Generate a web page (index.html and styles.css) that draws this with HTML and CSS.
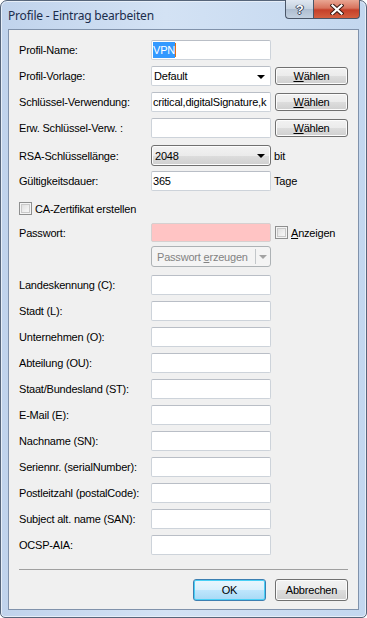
FILE: index.html
```html
<!DOCTYPE html>
<html lang="de">
<head>
  <meta charset="UTF-8">
  <title>Profile - Eintrag bearbeiten</title>
  <link rel="stylesheet" href="styles.css">
</head>
<body>
  <div class="window">
    <div class="titlebar">
      <span class="title">Profile - Eintrag bearbeiten</span>
      <div class="caption-buttons">
        <div class="cap-btn help">?</div>
        <div class="cap-btn close">
          <svg width="14" height="11" viewBox="0 0 14 11">
            <path d="M2.5 1.5 L11.5 9.5 M11.5 1.5 L2.5 9.5" stroke="#3b1a14" stroke-width="4.2" stroke-linecap="square" />
            <path d="M2.5 1.5 L11.5 9.5 M11.5 1.5 L2.5 9.5" stroke="#fff" stroke-width="2.2" stroke-linecap="square" />
          </svg>
        </div>
      </div>
    </div>

    <div class="client">
      <div class="form">
        <div class="row">
          <label class="lbl">Profil-Name:</label>
          <div class="edit"><span class="selected">VPN</span><span class="caret"></span></div>
        </div>
        <div class="row">
          <label class="lbl">Profil-Vorlage:</label>
          <div class="edit combo">Default<span class="arrow"></span></div>
          <button class="btn pick"><u>W</u>ählen</button>
        </div>
        <div class="row">
          <label class="lbl">Schlüssel-Verwendung:</label>
          <div class="edit">critical,digitalSignature,k</div>
          <button class="btn pick"><u>W</u>ählen</button>
        </div>
        <div class="row">
          <label class="lbl">Erw. Schlüssel-Verw. :</label>
          <div class="edit"></div>
          <button class="btn pick"><u>W</u>ählen</button>
        </div>
        <div class="row row-rsa">
          <label class="lbl">RSA-Schlüssellänge:</label>
          <div class="dropdown">2048<span class="arrow"></span></div>
          <span class="unit">bit</span>
        </div>
        <div class="row row-valid">
          <label class="lbl">Gültigkeitsdauer:</label>
          <div class="edit">365</div>
          <span class="unit">Tage</span>
        </div>
        <div class="row row-check">
          <span class="checkbox"></span>
          <span class="check-text">CA-Zertifikat erstellen</span>
        </div>
        <div class="row row-pass">
          <label class="lbl">Passwort:</label>
          <div class="edit required"></div>
          <span class="checkbox show"></span>
          <span class="check-text"><u>A</u>nzeigen</span>
        </div>
        <div class="row row-gen">
          <span class="lbl"></span>
          <div class="split disabled">
            <span class="split-text"><span>Passwort <u>e</u>rzeugen</span></span>
            <span class="split-arrow"><span class="arrow"></span></span>
          </div>
        </div>
        <div class="row row-first">
          <label class="lbl">Landeskennung (C):</label>
          <div class="edit"></div>
        </div>
        <div class="row">
          <label class="lbl">Stadt (L):</label>
          <div class="edit"></div>
        </div>
        <div class="row">
          <label class="lbl">Unternehmen (O):</label>
          <div class="edit"></div>
        </div>
        <div class="row">
          <label class="lbl">Abteilung (OU):</label>
          <div class="edit"></div>
        </div>
        <div class="row">
          <label class="lbl">Staat/Bundesland (ST):</label>
          <div class="edit"></div>
        </div>
        <div class="row">
          <label class="lbl">E-Mail (E):</label>
          <div class="edit"></div>
        </div>
        <div class="row">
          <label class="lbl">Nachname (SN):</label>
          <div class="edit"></div>
        </div>
        <div class="row">
          <label class="lbl">Seriennr. (serialNumber):</label>
          <div class="edit"></div>
        </div>
        <div class="row">
          <label class="lbl">Postleitzahl (postalCode):</label>
          <div class="edit"></div>
        </div>
        <div class="row">
          <label class="lbl">Subject alt. name (SAN):</label>
          <div class="edit"></div>
        </div>
        <div class="row">
          <label class="lbl">OCSP-AIA:</label>
          <div class="edit"></div>
        </div>
      </div>

      <div class="separator"></div>

      <div class="footer">
        <button class="btn dialog default">OK</button>
        <button class="btn dialog">Abbrechen</button>
      </div>
    </div>
  </div>
</body>
</html>
```

FILE: styles.css
```css
body {
  margin: 0;
  background: #fff;
  font-family: "Liberation Sans", Arial, sans-serif;
  font-size: 11px;
  letter-spacing: -0.2px;
  color: #000;
}

.window {
  width: 367px;
  height: 618px;
  box-sizing: border-box;
  padding: 0 7px 7px 7px;
  border: 1px solid #56657a;
  border-radius: 7px 7px 5px 5px;
  background: linear-gradient(90deg, #c0d3ec 0%, #d3e2f4 45%, #c3d7ef 100%);
  box-shadow: inset 0 0 0 1px #e6eef8;
  display: flex;
  flex-direction: column;
}

/* Titelleiste */
.titlebar {
  height: 28px;
  display: flex;
  align-items: flex-start;
  justify-content: space-between;
}

.title {
  font-family: "Noto Sans", "Liberation Sans", sans-serif;
  font-size: 12px;
  color: #1b2d4c;
  margin-top: 6px;
  letter-spacing: -0.2px;
}

.caption-buttons {
  display: flex;
  margin-top: -1px;
  margin-right: -1px;
}

.cap-btn {
  height: 19px;
  box-sizing: border-box;
  border: 1px solid #4a5668;
  border-top: none;
  display: flex;
  align-items: center;
  justify-content: center;
}

.cap-btn.help {
  width: 28px;
  border-right: none;
  border-radius: 0 0 0 4px;
  background: linear-gradient(#dfe7f1 0%, #c6d2e0 48%, #aebdd0 52%, #c2d0e0 100%);
  font-family: "Liberation Sans", sans-serif;
  font-weight: bold;
  font-size: 13px;
  color: #fff;
  text-shadow: 0 0 1px #28324a, 1px 0 0 #3a4660, -1px 0 0 #3a4660, 0 1px 0 #3a4660;
}

.cap-btn.close {
  width: 47px;
  border-radius: 0 0 4px 0;
  background: linear-gradient(#e9a693 0%, #d8735d 45%, #c5402a 55%, #d45f3f 100%);
}

/* Client-Bereich */
.client {
  flex: 1;
  border: 1px solid #8092ab;
  background: #f0f0f0;
  padding: 10px 10px 0 10px;
}

.row {
  display: flex;
  align-items: center;
  height: 20px;
  margin-top: 6px;
}

.row:first-child {
  margin-top: 0;
}

.row-rsa {
  height: 21px;
  margin-top: 7px;
}

.row-valid {
  margin-top: 5px;
}

.row-check {
  height: 19px;
  margin-top: 8px;
}

.row-pass {
  height: 19px;
  margin-top: 5px;
}

.row-gen {
  height: 21px;
  margin-top: 4px;
}

.row-first {
  margin-top: 8px;
}

.lbl {
  width: 132px;
  flex: none;
  white-space: nowrap;
}

.edit {
  width: 120px;
  height: 100%;
  box-sizing: border-box;
  flex: none;
  border: 1px solid #cdd3da;
  border-top-color: #b9bec6;
  border-radius: 2px;
  background: #fff;
  padding: 0 1px;
  display: flex;
  align-items: center;
  white-space: nowrap;
  overflow: hidden;
  position: relative;
}

.edit.required {
  background: #ffc4c4;
  border-color: #d6d0d0;
}

.selected {
  background: #3399ff;
  color: #fff;
  padding: 1px 0;
  line-height: 14px;
}

.caret {
  width: 1px;
  height: 14px;
  background: #e07010;
}

.edit.combo {
  padding-left: 2px;
}

.arrow {
  width: 0;
  height: 0;
  border-left: 4px solid transparent;
  border-right: 4px solid transparent;
  border-top: 4px solid #000;
}

.edit.combo .arrow,
.dropdown .arrow {
  position: absolute;
  right: 5px;
  top: 8px;
}

.dropdown {
  width: 120px;
  height: 100%;
  box-sizing: border-box;
  flex: none;
  position: relative;
  border: 1px solid #707070;
  border-radius: 3px;
  background: linear-gradient(#f2f2f2 0%, #ebebeb 50%, #dddddd 51%, #cfcfcf 100%);
  box-shadow: inset 0 0 0 1px #fcfcfc;
  padding-left: 3px;
  display: flex;
  align-items: center;
}

.unit {
  margin-left: 3px;
}

.btn {
  font-family: "Liberation Sans", Arial, sans-serif;
  font-size: 11px;
  letter-spacing: -0.2px;
  color: #000;
  margin: 0;
  padding: 0;
  border: 1px solid #707070;
  border-radius: 3px;
  background: linear-gradient(#f2f2f2 0%, #ebebeb 50%, #dddddd 51%, #cfcfcf 100%);
  box-shadow: inset 0 0 0 1px #fcfcfc;
}

.btn.pick {
  width: 73px;
  height: 18px;
  margin-left: 4px;
}

/* Checkboxen */
.checkbox {
  width: 13px;
  height: 13px;
  box-sizing: border-box;
  flex: none;
  border: 1px solid #8e8f8f;
  background: linear-gradient(135deg, #d9d9d9 0%, #f0f0f0 60%, #fbfbfb 100%);
  box-shadow: inset 0 0 0 1px #f4f4f4, inset 0 0 0 2px #c9c9c9;
}

.check-text {
  margin-left: 3px;
  white-space: nowrap;
}

.checkbox.show {
  margin-left: 4px;
}

/* Splitbutton */
.split {
  width: 120px;
  height: 100%;
  box-sizing: border-box;
  flex: none;
  border: 1px solid #adb2b5;
  border-radius: 3px;
  background: #f4f4f4;
  display: flex;
  align-items: stretch;
  color: #838383;
}

.split-text {
  flex: 1;
  display: flex;
  align-items: center;
  padding-left: 5px;
  white-space: nowrap;
}

.split-arrow {
  width: 14px;
  border-left: 1px solid #c3c7ca;
  margin: 2px 0;
  display: flex;
  align-items: center;
  justify-content: center;
}

.split-arrow .arrow {
  border-top-color: #a3a3a3;
}

/* Fußbereich */
.separator {
  height: 1px;
  background: #a0a0a0;
  margin-top: 14px;
}

.footer {
  display: flex;
  justify-content: flex-end;
  gap: 9px;
  margin-top: 9px;
}

.btn.dialog {
  width: 73px;
  height: 22px;
}

.btn.default {
  border-color: #3c7fb1;
  background: linear-gradient(#eaf6fd 0%, #d9f0fc 50%, #bee6fd 51%, #a7d9f5 100%);
  box-shadow: inset 0 0 0 1px #48d0f6;
}
```
